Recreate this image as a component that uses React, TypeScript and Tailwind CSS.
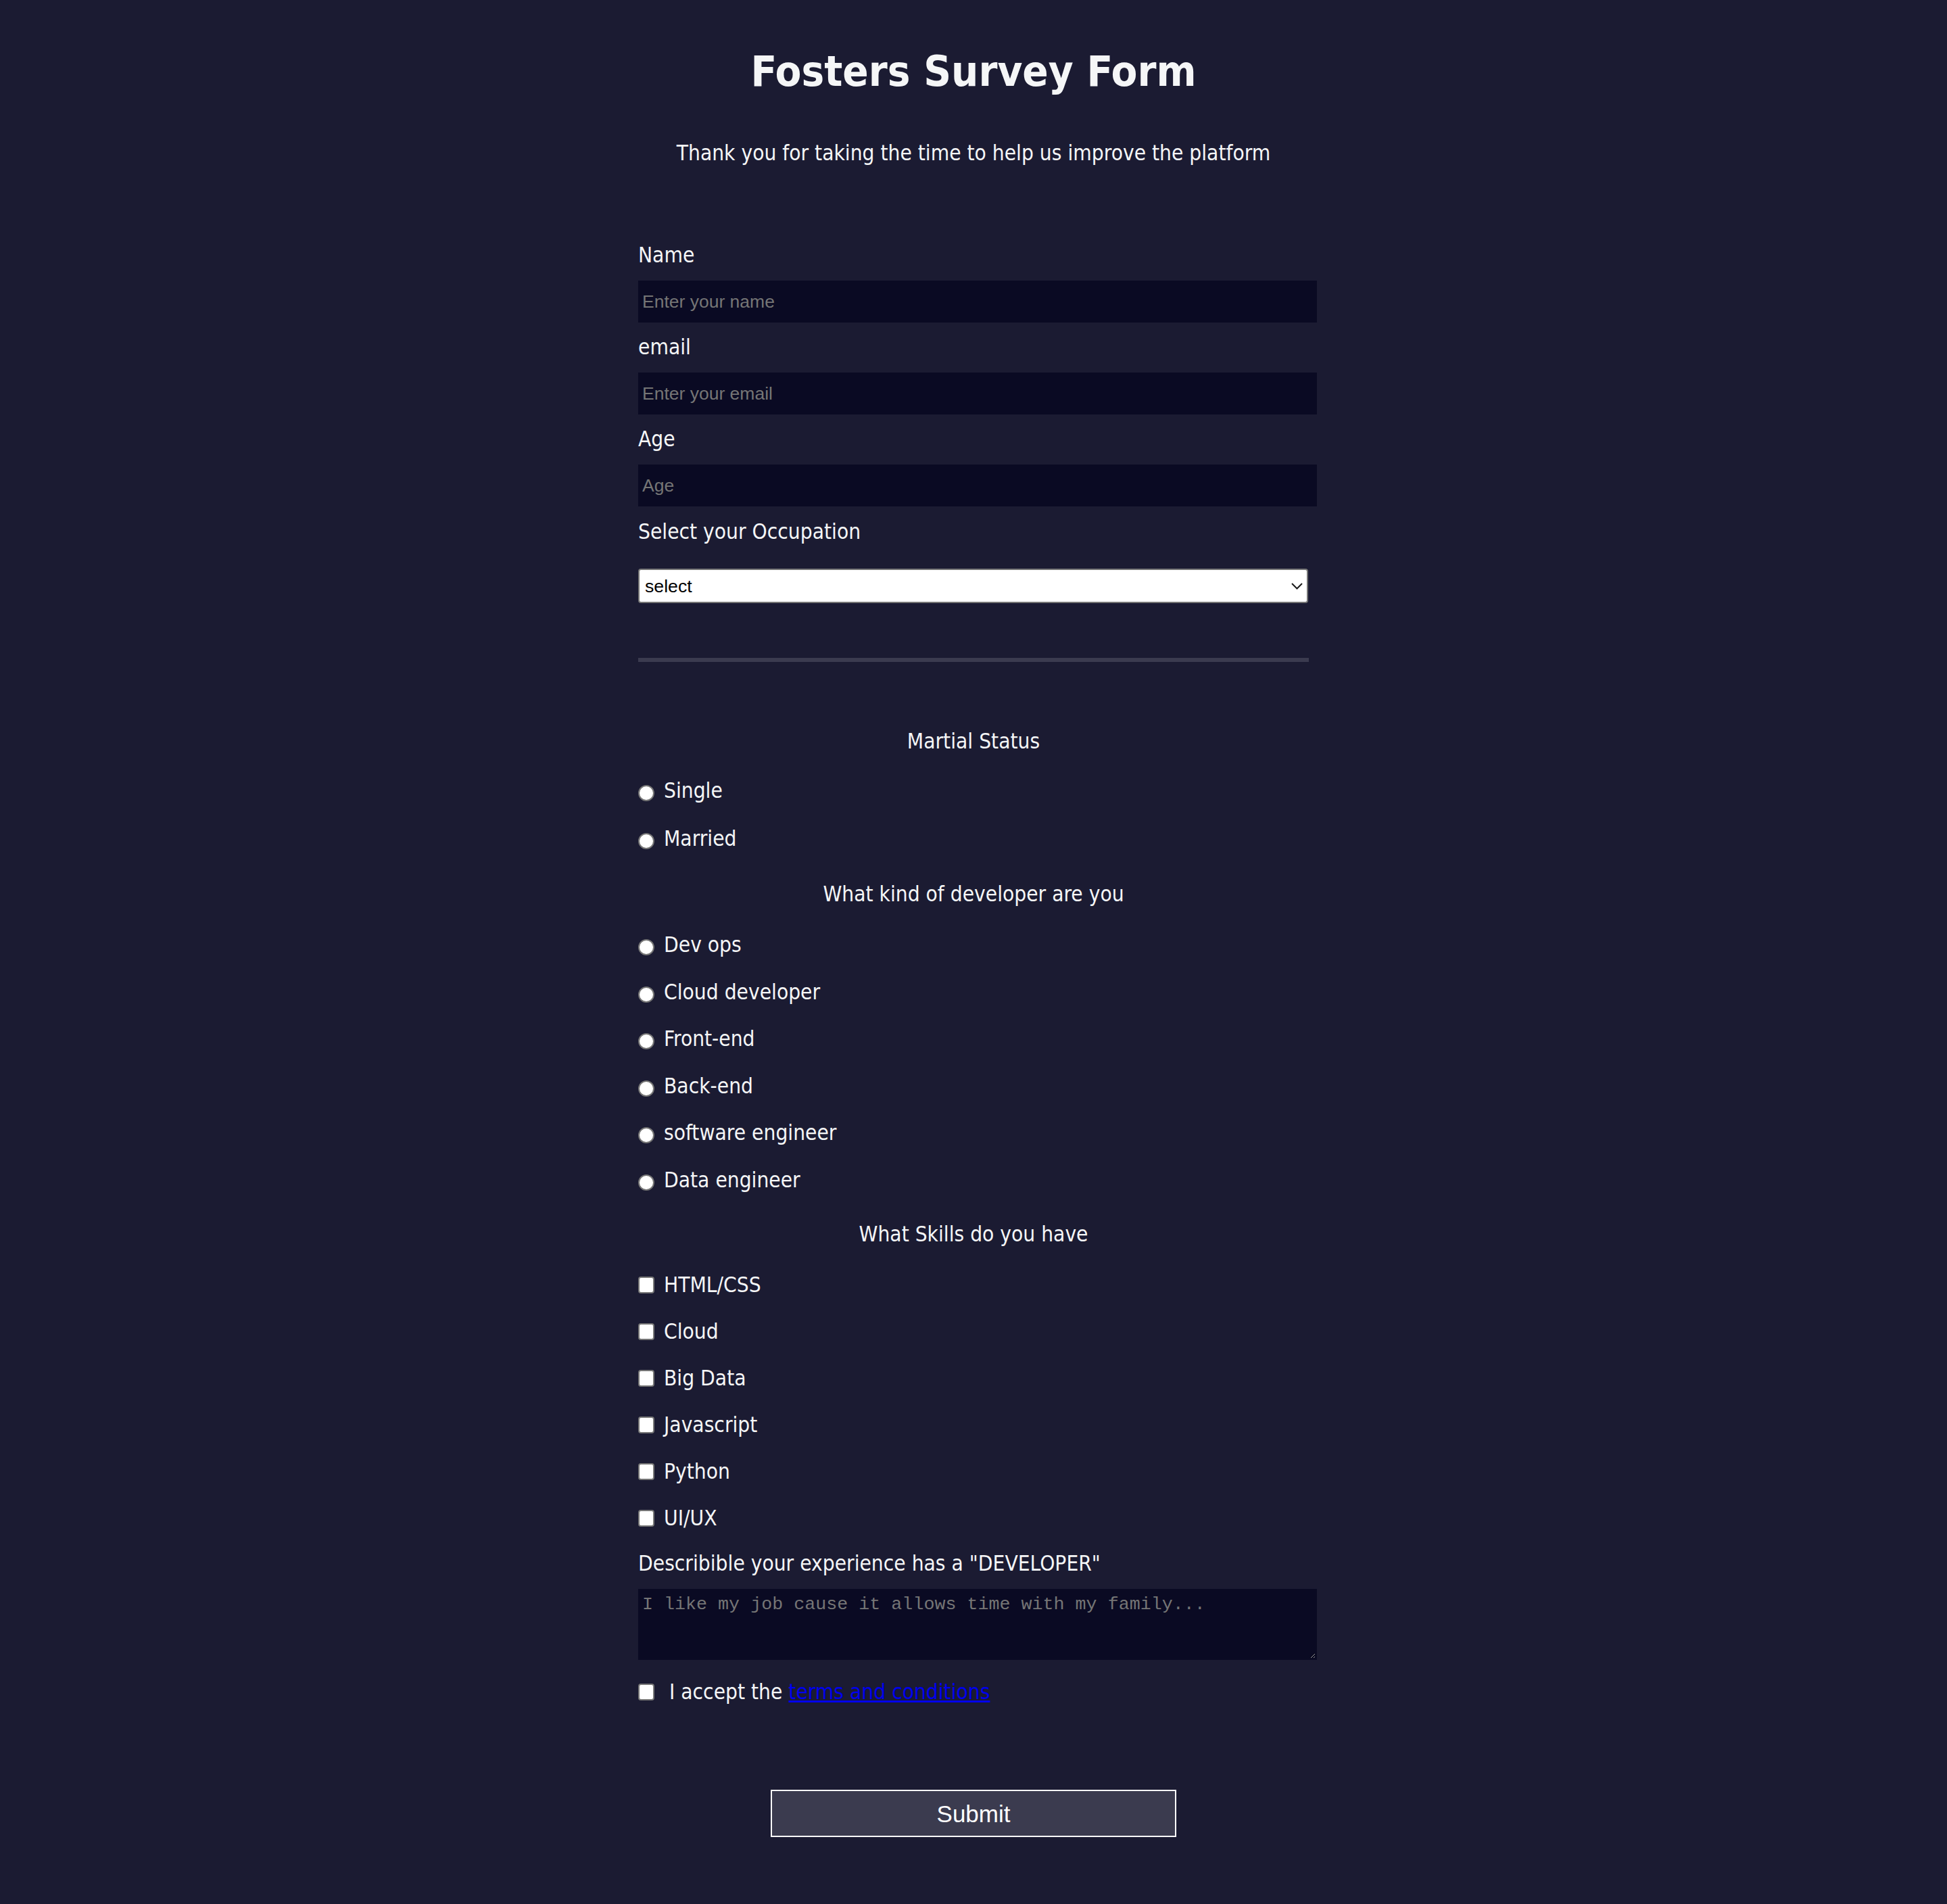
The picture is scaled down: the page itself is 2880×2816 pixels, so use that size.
export default function App() {
  const devs = ["Dev ops", "Cloud developer", "Front-end", "Back-end", "software engineer", "Data engineer"];
  const skills = ["HTML/CSS", "Cloud", "Big Data", "Javascript", "Python", "UI/UX"];
  const inputCls =
    "w-[1004px] h-[62px] mt-[18px] bg-[#0a0a23] border-2 border-[#0a0a23] px-[4px] text-white font-['Liberation_Sans',Arial,sans-serif] text-[26.5px] leading-normal placeholder:text-[#757575] outline-none";
  const radioCls =
    "appearance-none shrink-0 w-[24px] h-[24px] mt-[12px] rounded-full bg-white border-2 border-[#767676]";
  const checkCls =
    "appearance-none shrink-0 w-[24px] h-[25px] rounded-[4px] bg-white border-2 border-[#767676]";
  return (
    <div className="min-h-[2816px] w-full bg-[#1b1b32] text-[#f5f6f7] font-['DejaVu_Sans_Condensed','DejaVu_Sans',sans-serif] text-[31.4px] leading-[40px] flex flex-col items-center pb-[99px]">
      <h1 className="mt-[66px] h-[80px] text-[63px] leading-[80px] font-bold text-center">Fosters Survey Form</h1>
      <p className="mt-[60px] h-[40px] text-center">Thank you for taking the time to help us improve the platform</p>
      <form className="w-[992px] mt-[111px] flex flex-col" onSubmit={(e) => e.preventDefault()}>
        <label className="h-[40px]">Name</label>
        <input type="text" className={inputCls} placeholder="Enter your name" />
        <label className="h-[40px] mt-[16px]">email</label>
        <input type="email" className={inputCls} placeholder="Enter your email" />
        <label className="h-[40px] mt-[16px]">Age</label>
        <input type="number" className={inputCls} placeholder="Age" />
        <label className="h-[40px] mt-[17px]">Select your Occupation</label>
        <div className="relative w-[991px] h-[51px] mt-[35px]">
          <select className="appearance-none w-full h-full bg-white border-2 border-[#767676] rounded-[4px] pl-[8px] text-black font-['Liberation_Sans',Arial,sans-serif] text-[26.7px] outline-none">
            <option>select</option>
            <option>Student</option>
            <option>Employed</option>
            <option>Unemployed</option>
          </select>
          <svg className="absolute right-[8px] top-[21px] pointer-events-none" width="17" height="10" viewBox="0 0 17 10">
            <path d="M1 1 L8.5 8.5 L16 1" fill="none" stroke="#1a1a1a" strokeWidth="2" />
          </svg>
        </div>
        <div className="w-[992px] h-[6px] mt-[81px] bg-[#3b3b4f]" />
        <div className="h-[40px] mt-[97px] text-center">Martial Status</div>
        <div className="mt-[33px] flex flex-col gap-[31px]">
          {["Single", "Married"].map((s) => (
            <label key={s} className="h-[40px] flex items-start gap-[14px]">
              <input type="radio" name="status" className={radioCls} />
              <span>{s}</span>
            </label>
          ))}
        </div>
        <div className="h-[40px] mt-[42px] text-center">What kind of developer are you</div>
        <div className="mt-[35px] flex flex-col gap-[29.5px]">
          {devs.map((s) => (
            <label key={s} className="h-[40px] flex items-start gap-[14px]">
              <input type="radio" name="dev" className={radioCls} />
              <span>{s}</span>
            </label>
          ))}
        </div>
        <div className="h-[40px] mt-[40.5px] text-center">What Skills do you have</div>
        <div className="mt-[35px] flex flex-col gap-[29px]">
          {skills.map((s) => (
            <label key={s} className="h-[40px] flex items-center gap-[14px]">
              <input type="checkbox" className={checkCls} />
              <span>{s}</span>
            </label>
          ))}
        </div>
        <label className="h-[40px] mt-[27px]">Describible your experience has a "DEVELOPER"</label>
        <textarea
          className="w-[1004px] h-[105px] mt-[18px] bg-[#0a0a23] border-2 border-[#0a0a23] px-[4px] pt-[1px] text-white font-['Liberation_Mono','Courier_New',monospace] text-[26.7px] leading-normal placeholder:text-[#757575] outline-none resize"
          placeholder="I like my job cause it allows time with my family..."
        />
        <label className="h-[40px] mt-[27px] flex items-center gap-[22px]">
          <input type="checkbox" className={checkCls} />
          <span>
            I accept the{" "}
            <a href="#" className="text-[#0000ee] underline">
              terms and conditions
            </a>
          </span>
        </label>
        <button
          type="submit"
          className="self-center w-[600px] h-[70px] mt-[125px] bg-[#3b3b4f] border-2 border-white text-white font-['Liberation_Sans',Arial,sans-serif] text-[35px] leading-none"
        >
          Submit
        </button>
      </form>
    </div>
  );
}
